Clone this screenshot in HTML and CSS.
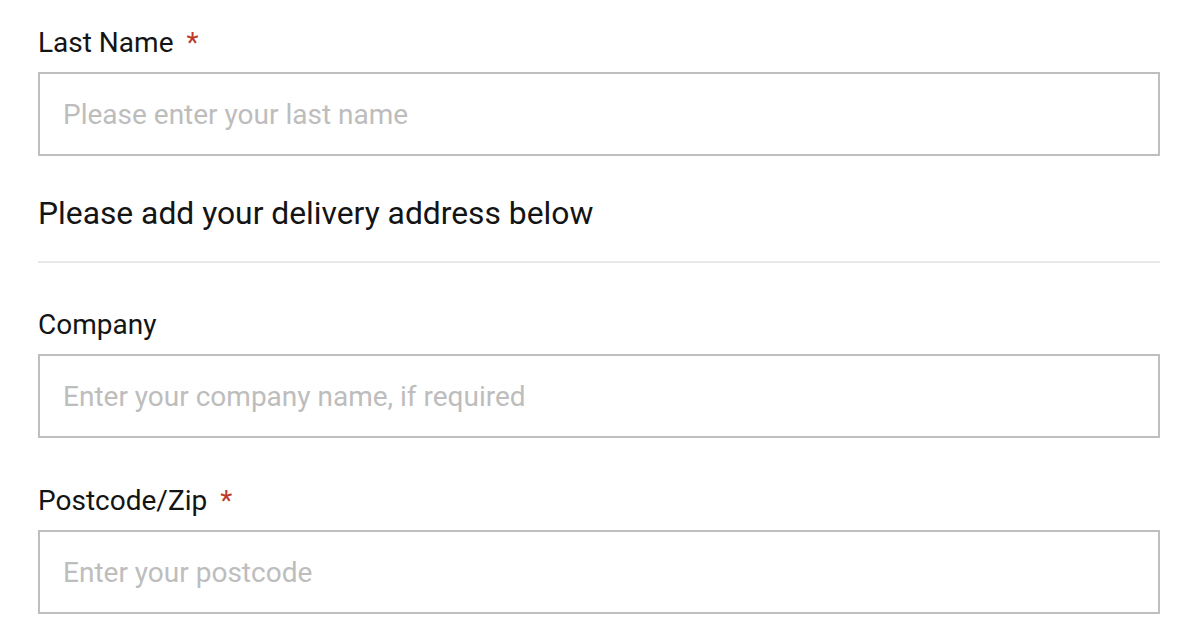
FILE: index.html
```html
<!DOCTYPE html>
<html lang="en">
<head>
<meta charset="utf-8">
<title>Delivery details</title>
<link rel="stylesheet" href="styles.css">
</head>
<body>
<form class="form">
  <div class="field first">
    <label class="label" for="last">Last Name<span class="req">*</span></label>
    <input class="input" id="last" type="text" placeholder="Please enter your last name">
  </div>
  <h2 class="heading">Please add your delivery address below</h2>
  <hr class="divider">
  <div class="field after-divider">
    <label class="label" for="company">Company</label>
    <input class="input" id="company" type="text" placeholder="Enter your company name, if required">
  </div>
  <div class="field">
    <label class="label" for="zip">Postcode/Zip<span class="req">*</span></label>
    <input class="input" id="zip" type="text" placeholder="Enter your postcode">
  </div>
</form>
</body>
</html>
```
FILE: styles.css
```css
* { box-sizing: border-box; }
html, body { margin: 0; padding: 0; background: #fff; }
body {
  font-family: Roboto, "Liberation Sans", Arial, sans-serif;
  color: #141414;
}
.form {
  width: 1122px;
  margin: 0 0 0 38px;
  padding-top: 27px;
  display: flex;
  flex-direction: column;
}
.field {
  display: flex;
  flex-direction: column;
  margin-top: 47px;
}
.field.first { margin-top: 0; }
.field.after-divider { margin-top: 46px; }
.label {
  font-size: 28px;
  line-height: 32px;
  margin-bottom: 13px;
}
.req {
  color: #c0392b;
  margin-left: 13px;
}
.input {
  height: 84px;
  width: 100%;
  border: 2px solid #bfbfbf;
  border-radius: 0;
  padding: 0 23px;
  font-family: inherit;
  font-size: 28px;
  color: #141414;
  background: #fff;
  outline: none;
}
.input::placeholder { color: #bdbdbd; opacity: 1; }
.heading {
  margin: 38px 0 0;
  font-size: 31.8px;
  font-weight: 400;
  line-height: 38px;
}
.divider {
  margin: 29px 0 0;
  border: 0;
  height: 2px;
  background: #e8e8e8;
}
```
